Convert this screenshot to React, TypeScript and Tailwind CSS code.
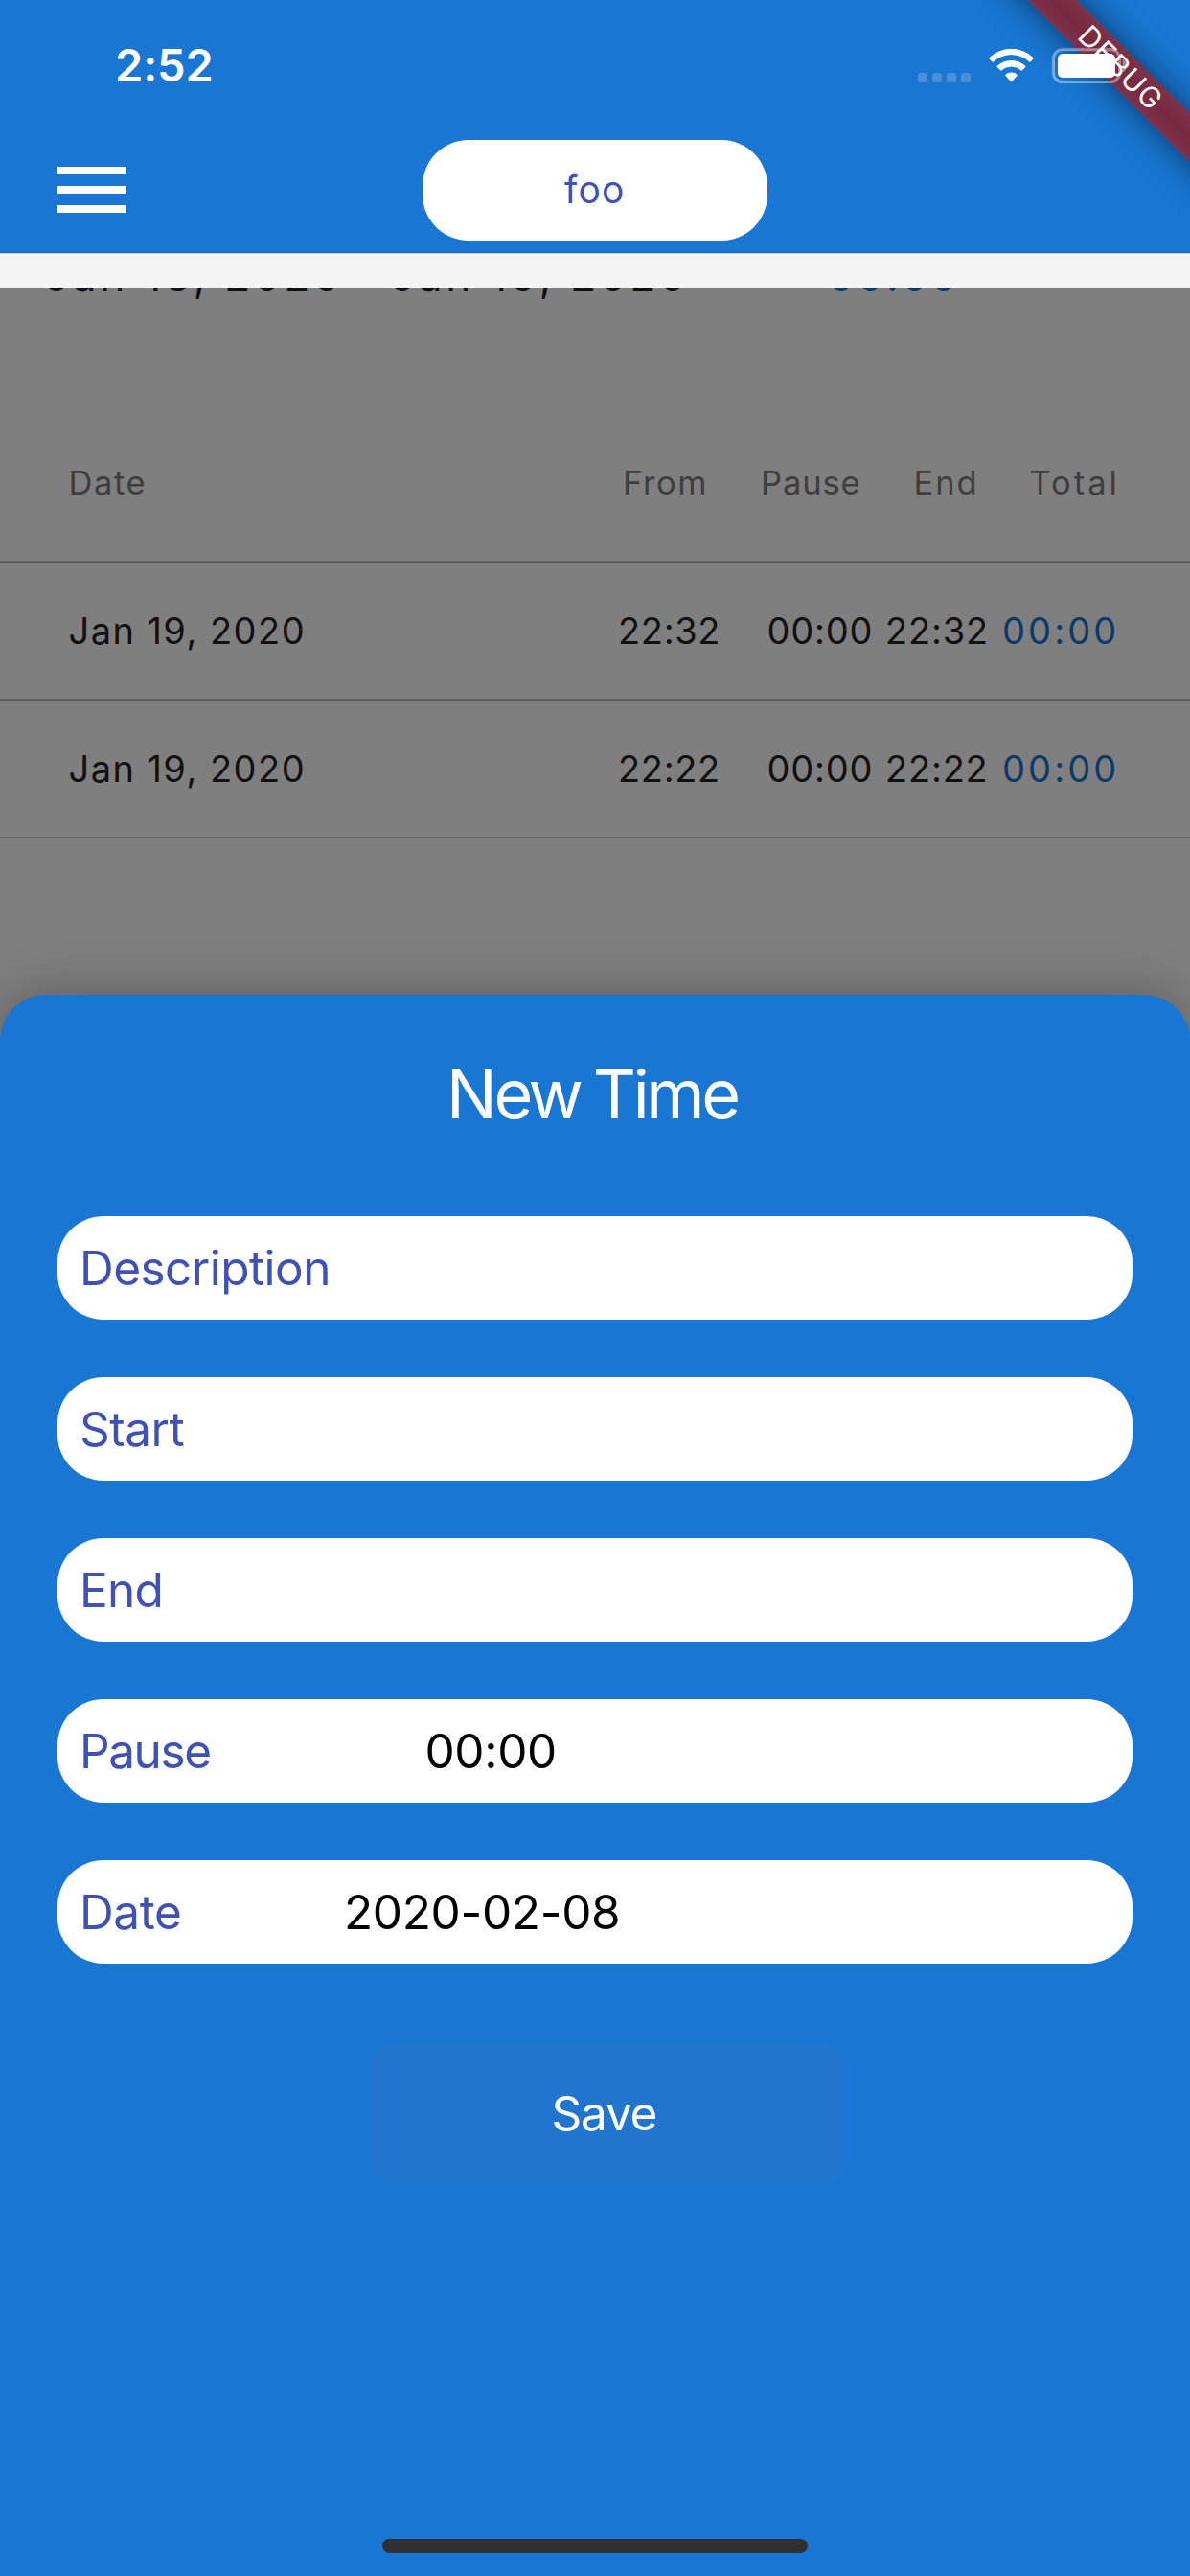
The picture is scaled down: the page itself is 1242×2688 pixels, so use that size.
const headings = [
  { text: "Date", cls: "pl-[71.5px] tracking-[1.6px]" },
  { text: "From", cls: "pl-[30px] tracking-[1.6px]" },
  { text: "Pause", cls: "pl-[14px] tracking-[0.9px]" },
  { text: "End", cls: "pl-[38.5px] tracking-[1.9px]" },
  { text: "Total", cls: "pl-[39.5px] tracking-[3px]" },
];

const entries = [
  { date: "Jan 19, 2020", from: "22:32", pause: "00:00", end: "22:32", total: "00:00" },
  { date: "Jan 19, 2020", from: "22:22", pause: "00:00", end: "22:22", total: "00:00" },
];

const fields = [
  { label: "Description", labelCls: "tracking-[-0.54px]", value: "", valueCls: "" },
  { label: "Start", labelCls: "tracking-[-0.5px]", value: "", valueCls: "" },
  { label: "End", labelCls: "tracking-[-0.75px]", value: "", valueCls: "" },
  { label: "Pause", labelCls: "w-[360.5px] tracking-[-1.4px]", value: "00:00", valueCls: "tracking-[-0.36px]" },
  { label: "Date", labelCls: "w-[276px] tracking-[-0.41px]", value: "2020-02-08", valueCls: "tracking-[-0.33px]" },
];

const columns = "grid grid-cols-[620px_160px_135px_120px_207px] items-center";

function StatusIcons() {
  return (
    <svg className="relative z-20 ml-auto mr-[66px] h-[37px] w-[218px]" viewBox="0 0 218 37" fill="none">
      <g fill="#fff" fillOpacity="0.2">
        <rect x="0" y="26" width="10" height="10" rx="2.6" />
        <rect x="15" y="26" width="10" height="10" rx="2.6" />
        <rect x="30" y="26" width="10" height="10" rx="2.6" />
        <rect x="45" y="26" width="10" height="10" rx="2.6" />
      </g>
      <g fill="#fff" stroke="#fff" strokeWidth="1" strokeLinejoin="round">
        <path d="M74.4 10.8A33 33 0 0 1 120.6 10.8L116.9 14.6A27.6 27.6 0 0 0 78.1 14.6Z" />
        <path d="M82.7 19.4A21.5 21.5 0 0 1 112.3 19.4L108.3 23.3A16 16 0 0 0 86.7 23.3Z" />
        <path d="M91.3 28.2A9.6 9.6 0 0 1 103.7 28.2L97.5 35.2Z" />
      </g>
      <rect x="141.5" y="1.7" width="69" height="34" rx="9.5" stroke="#fff" strokeOpacity="0.4" strokeWidth="3" />
      <rect x="146" y="6" width="60" height="25" rx="5" fill="#fff" />
      <path d="M213.7 11.5Q217.8 14 217.8 18.5Q217.8 23 213.7 25.5Z" fill="#fff" fillOpacity="0.4" />
    </svg>
  );
}

function DebugBanner() {
  return (
    <div className="absolute right-0 top-0 z-10 h-[240px] w-[240px] overflow-hidden">
      <div className="absolute left-[8px] top-[54px] flex h-[36px] w-[320px] rotate-45 items-center justify-center bg-linear-to-b from-[#7e324a] via-[#772a3f] to-[#7e324a] shadow-[0_0_34px_rgba(0,0,0,0.55)]">
        <span className="relative -left-px -top-px text-[30px] leading-none tracking-[1.3px] text-white">DEBUG</span>
      </div>
    </div>
  );
}

function Header() {
  return (
    <header className="h-[264px] border-b border-[#1664b2] bg-[#1976d2]">
      <div className="flex h-[136px] items-center pl-[120px]">
        <span className="pb-[2px] text-[47px] font-semibold leading-none tracking-[-0.1px] text-white">2:52</span>
        <StatusIcons />
      </div>
      <div className="flex h-[124px] items-center pl-[60px]">
        <div className="flex h-[48px] w-[72px] flex-col justify-between">
          <div className="h-[8px] bg-white" />
          <div className="h-[8px] bg-white" />
          <div className="h-[8px] bg-white" />
        </div>
        <div className="ml-[309px] flex h-[105px] w-[360px] items-center rounded-[48px] bg-white pl-[148px]">
          <span className="pb-[2px] text-[39px] leading-none tracking-[1.2px] text-[#3f51b5]">foo</span>
        </div>
      </div>
    </header>
  );
}

function TimeTable() {
  return (
    <section className="h-[738px] overflow-hidden bg-[#7f7f7f]">
      <div className="flex h-[120px] items-start text-[44px] text-[#111]">
        <div className="-mt-[42px] flex leading-[60px]">
          <span className="w-[361px] whitespace-nowrap pl-[47px] tracking-[3.75px]">Jan 13, 2020</span>
          <span className="w-[503px] whitespace-nowrap pl-[47px] tracking-[3.75px]">Jan 19, 2020</span>
          <span className="tracking-[2.76px] text-[#0c3b69]">00:00</span>
        </div>
      </div>
      <div className={columns + " h-[168px] border-b-[3px] border-[#606060] pt-[3px] text-[34.5px] leading-none text-[#3e3e3e]"}>
        {headings.map((h) => (
          <span key={h.text} className={h.cls}>{h.text}</span>
        ))}
      </div>
      {entries.map((e, i) => (
        <div
          key={i}
          className={columns + " h-[144px] border-b-[3px] border-[#606060] pb-[2px] text-[38px] leading-none text-[#111] last:border-[#6e6e6e]"}
        >
          <span className="pl-[71.5px] tracking-[1.45px]">{e.date}</span>
          <span className="pl-[25px] tracking-[0.65px]">{e.from}</span>
          <span className="pl-[20.5px] tracking-[0.78px]">{e.pause}</span>
          <span className="pl-[9px] tracking-[0.78px]">{e.end}</span>
          <span className="pl-[11px] tracking-[3.1px] text-[#0c3b69]">{e.total}</span>
        </div>
      ))}
    </section>
  );
}

function NewTimeSheet() {
  return (
    <section className="relative flex h-[1650px] flex-col rounded-t-[48px] bg-[#1976d2] px-[60px] shadow-[0_0_56px_rgba(0,0,0,0.28)]">
      <h1 className="flex h-[207px] items-center pl-[406px] pt-px text-[70px] font-normal leading-none tracking-[-3.35px] text-white [word-spacing:-3px]">
        New Time
      </h1>
      <div className="mt-[24px] flex flex-col gap-[60px]">
        {fields.map((f) => (
          <div key={f.label} className="flex h-[108px] items-center rounded-[48px] bg-white pl-[23px] pt-[2px] text-[49.5px] leading-none">
            <span className={f.labelCls + " text-[#3f51b5]"}>{f.label}</span>
            <span className={f.valueCls + " text-black"}>{f.value}</span>
          </div>
        ))}
      </div>
      <button className="ml-[325px] mt-[84px] flex h-[144px] w-[497px] items-center rounded-[24px] bg-[#2175cf] pl-[190.5px] pt-[2px] text-[49.5px] leading-none tracking-[-1.2px] text-white">
        Save
      </button>
      <div className="mx-auto mb-[24px] mt-auto h-[15px] w-[444px] rounded-full bg-[#303030]" />
    </section>
  );
}

export default function App() {
  return (
    <div className="relative flex h-[2688px] w-[1242px] flex-col overflow-hidden bg-[#7f7f7f] font-['Inter',sans-serif]">
      <Header />
      <DebugBanner />
      <div className="h-[36px] border-t border-[#cfcfcf] bg-[#f4f4f4]" />
      <TimeTable />
      <NewTimeSheet />
    </div>
  );
}
